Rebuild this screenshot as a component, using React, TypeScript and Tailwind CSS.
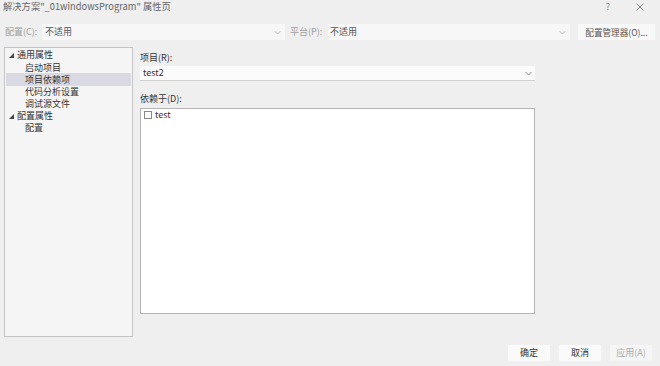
import React from "react";

const font = { fontFamily: '"Noto Sans CJK SC", "Noto Sans", sans-serif' };

function Chevron({ color = "#9a9a9a" }: { color?: string }) {
  return (
    <svg width="7" height="5" viewBox="0 0 7 5" fill="none">
      <path d="M0.5 1 L3.5 4 L6.5 1" stroke={color} strokeWidth="1" />
    </svg>
  );
}

function Tri() {
  return (
    <svg width="5" height="5" viewBox="0 0 5 5" className="shrink-0">
      <path d="M5 0 L5 5 L0 5 Z" fill="#444" />
    </svg>
  );
}

export default function App() {
  const tree: { label: string; level: number; selected?: boolean }[] = [
    { label: "通用属性", level: 0 },
    { label: "启动项目", level: 1 },
    { label: "项目依赖项", level: 1, selected: true },
    { label: "代码分析设置", level: 1 },
    { label: "调试源文件", level: 1 },
    { label: "配置属性", level: 0 },
    { label: "配置", level: 1 },
  ];
  return (
    <div
      className="w-[660px] h-[366px] bg-[#efefef] flex flex-col text-[9px] text-[#333] overflow-hidden"
      style={font}
    >
      {/* title bar */}
      <div className="h-[20px] flex items-start pt-[1px] pl-[3px] pr-[10px] text-[#666] leading-[11px]">
        <div className="flex-1 text-[9.3px]">解决方案"_01windowsProgram" 属性页</div>
        <div className="w-[20px] text-center text-[#888]">?</div>
        <div className="w-[20px] ml-[12px] h-[11px] flex items-center justify-center">
          <svg width="8" height="8" viewBox="0 0 8 8">
            <path d="M0.5 0.5 L7.5 7.5 M7.5 0.5 L0.5 7.5" stroke="#777" strokeWidth="0.9" />
          </svg>
        </div>
      </div>

      {/* toolbar */}
      <div className="mt-[4px] h-[16px] flex items-center pl-[5px]">
        <div className="w-[37px] text-[#a0a0a0]">配置(C):</div>
        <div className="w-[243px] h-[16px] bg-[#f7f7f7] flex items-center pl-[3px] pr-[4px]">
          <span className="flex-1 text-[#555]">不适用</span>
          <Chevron color="#c0c0c0" />
        </div>
        <div className="w-[43px] pl-[5px] text-[#a0a0a0]">平台(P):</div>
        <div className="w-[242px] h-[16px] bg-[#f7f7f7] flex items-center pl-[2px] pr-[4px]">
          <span className="flex-1 text-[#555]">不适用</span>
          <Chevron color="#c0c0c0" />
        </div>
        <div className="ml-[8px] w-[77px] h-[16px] bg-[#f8f8f8] flex items-center justify-center text-[#555] text-[8.6px]">
          配置管理器(O)...
        </div>
      </div>

      {/* main */}
      <div className="mt-[7px] h-[290px] flex pl-[4px]">
        <div className="w-[129px] h-full bg-[#f5f5f5] border border-[#c4c4c4] pt-[1px] pl-[1px] pr-[1px]">
          {tree.map((t) => (
            <div
              key={t.label}
              className={`h-[12.2px] flex items-center ${t.selected ? "bg-[#d9d9e3]" : ""}`}
            >
              {t.level === 0 ? (
                <div className="flex items-center pl-[3px] gap-[3px]">
                  <Tri />
                  <span>{t.label}</span>
                </div>
              ) : (
                <span className="pl-[19px]">{t.label}</span>
              )}
            </div>
          ))}
        </div>

        <div className="ml-[7px] w-[395px] flex flex-col">
          <div className="mt-[5px] h-[12px] flex items-center">项目(R):</div>
          <div className="mt-[2px] h-[15px] bg-[#fbfbfb] border-b border-[#d0d0d0] flex items-center pl-[3px] pr-[3px]">
            <span className="flex-1">test2</span>
            <Chevron color="#888" />
          </div>
          <div className="mt-[12px] h-[12px] flex items-center">依赖于(D):</div>
          <div className="mt-[3px] h-[206px] bg-white border border-[#b4b4b4] pt-[1px] pl-[3px]">
            <div className="flex items-center gap-[3px] h-[10px]">
              <div className="w-[8px] h-[8px] border border-[#888] bg-white" />
              <span>test</span>
            </div>
          </div>
        </div>
      </div>

      {/* buttons */}
      <div className="mt-[8px] h-[16px] flex justify-end pr-[8px] gap-[9px]">
        <div className="w-[42px] h-[16px] bg-[#fafafa] flex items-center justify-center">确定</div>
        <div className="w-[42px] h-[16px] bg-[#fafafa] flex items-center justify-center">取消</div>
        <div className="w-[42px] h-[16px] bg-[#f5f5f5] flex items-center justify-center text-[#aaa]">应用(A)</div>
      </div>
    </div>
  );
}
